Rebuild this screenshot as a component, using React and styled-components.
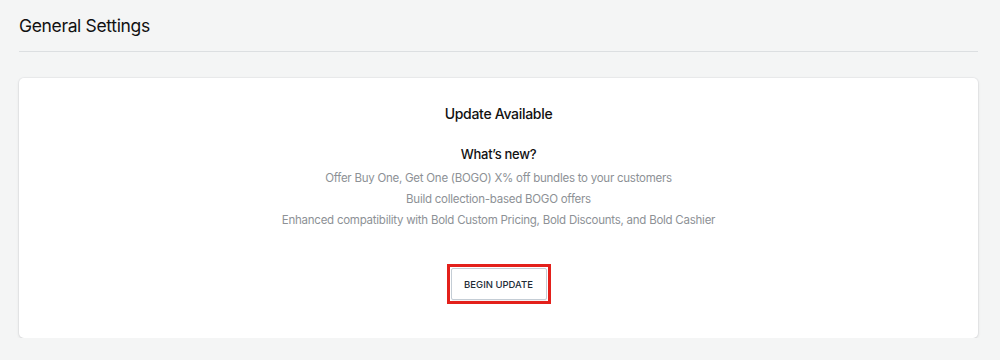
import React from 'react';
import styled, { createGlobalStyle } from 'styled-components';

const GlobalStyle = createGlobalStyle`
    body {
        margin: 0;
        background: #f4f5f5;
        font-family: Inter, "Noto Sans", sans-serif;
        color: #1a1a1a;
    }
`;

const features = [
    'Offer Buy One, Get One (BOGO) X% off bundles to your customers',
    'Build collection-based BOGO offers',
    'Enhanced compatibility with Bold Custom Pricing, Bold Discounts, and Bold Cashier',
];

const App = () => (
    <Page>
        <GlobalStyle />
        <Header>
            <PageTitle>General Settings</PageTitle>
        </Header>
        <Card>
            <CardTitle>Update Available</CardTitle>
            <SubTitle>What’s new?</SubTitle>
            <FeatureList>
                {features.map((f) => (
                    <Feature key={f}>{f}</Feature>
                ))}
            </FeatureList>
            <Highlight>
                <UpdateButton>BEGIN UPDATE</UpdateButton>
            </Highlight>
        </Card>
    </Page>
);

const Page = styled.div`
    padding: 0 22px 0 19px;
`;

const Header = styled.div`
    display: flex;
    align-items: center;
    height: 52px;
    border-bottom: 1px solid #dcdfe1;
    box-sizing: border-box;
`;

const PageTitle = styled.h1`
    margin: 0;
    font-size: 17.5px;
    font-weight: 400;
    letter-spacing: -0.35px;
    color: #111;
`;

const Card = styled.div`
    margin-top: 26px;
    height: 260px;
    box-sizing: border-box;
    background: #fff;
    border-radius: 5px;
    box-shadow: 0 0 0 1px rgba(63, 63, 68, 0.04), 0 1px 3px rgba(63, 63, 68, 0.15);
    padding-top: 26px;
    display: flex;
    flex-direction: column;
    align-items: center;
`;

const CardTitle = styled.h2`
    margin: 0;
    font-size: 14px;
    line-height: 20px;
    font-weight: 500;
    letter-spacing: -0.3px;
    color: #111;
`;

const SubTitle = styled.h3`
    margin: 20px 0 0;
    font-size: 13px;
    line-height: 20px;
    font-weight: 500;
    letter-spacing: -0.3px;
    color: #111;
`;

const FeatureList = styled.div`
    margin-top: 4px;
    display: flex;
    flex-direction: column;
    align-items: center;
`;

const Feature = styled.div`
    font-size: 11.5px;
    line-height: 21px;
    letter-spacing: -0.25px;
    color: #8d9196;
`;

const Highlight = styled.span`
    margin-top: 33px;
    display: inline-flex;
    padding: 1px;
    border: 3px solid #e3201b;
`;

const UpdateButton = styled.button`
    width: 96px;
    height: 32px;
    background: #fff;
    border: 1px solid #c4cdd5;
    border-radius: 2px;
    box-shadow: 0 1px 0 rgba(22, 29, 37, 0.05);
    font-family: Inter, "Noto Sans", sans-serif;
    font-size: 9.5px;
    font-weight: 500;
    color: #212b36;
    cursor: pointer;
`;

export default App;
